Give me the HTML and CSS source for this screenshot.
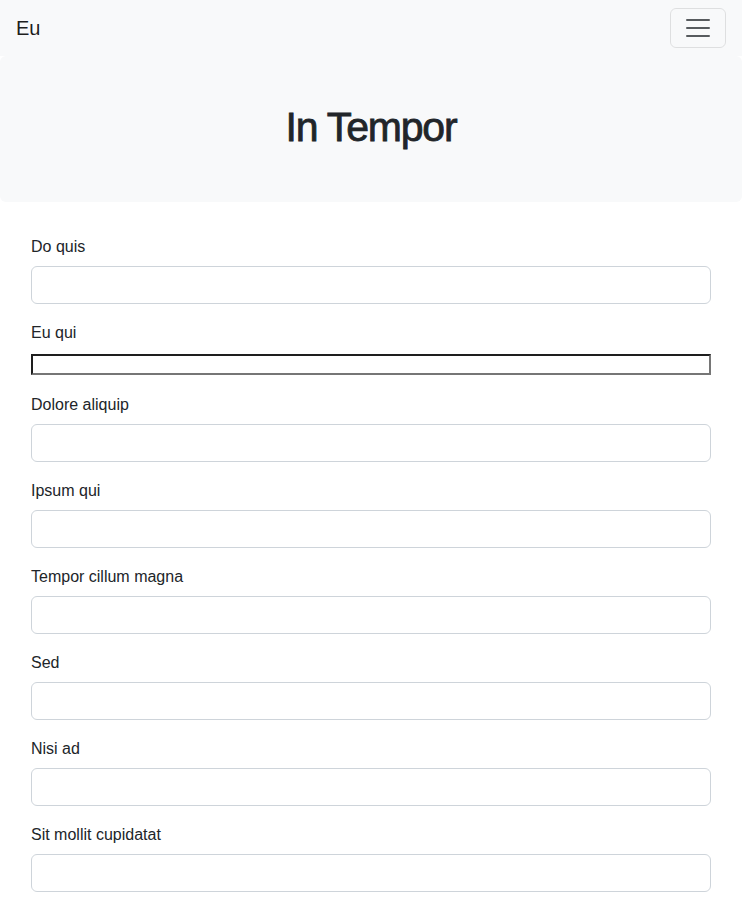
FILE: index.html
```html
<!DOCTYPE html>
<html lang="en">
<head>
<meta charset="utf-8">
<title>In Tempor</title>
<link rel="stylesheet" href="styles.css">
</head>
<body>
<nav class="navbar">
  <a class="brand" href="#">Eu</a>
  <button class="toggler" type="button" aria-label="Toggle navigation">
    <svg class="toggler-icon" viewBox="0 0 30 30" width="30" height="30"><path stroke="rgba(33,37,41,0.75)" stroke-linecap="round" stroke-miterlimit="10" stroke-width="2" d="M4 7h22M4 15h22M4 23h22"/></svg>
  </button>
</nav>
<header class="hero">
  <h1>In Tempor</h1>
</header>
<form class="form">
  <div class="field"><label>Do quis</label><input class="control" type="text"></div>
  <div class="field"><label>Eu qui</label><input class="plain" type="text"></div>
  <div class="field"><label>Dolore aliquip</label><input class="control" type="text"></div>
  <div class="field"><label>Ipsum qui</label><input class="control" type="text"></div>
  <div class="field"><label>Tempor cillum magna</label><input class="control" type="text"></div>
  <div class="field"><label>Sed</label><input class="control" type="text"></div>
  <div class="field"><label>Nisi ad</label><input class="control" type="text"></div>
  <div class="field"><label>Sit mollit cupidatat</label><input class="control" type="text"></div>
</form>
</body>
</html>
```

FILE: styles.css
```css
* { box-sizing: border-box; }
html, body { margin: 0; padding: 0; }
body {
  font-family: "Liberation Sans", Arial, sans-serif;
  font-size: 16px;
  line-height: 1.5;
  color: #212529;
  background: #fff;
}
.navbar {
  display: flex;
  align-items: center;
  justify-content: space-between;
  height: 56px;
  padding: 8px 16px;
  background: #f8f9fa;
}
.brand {
  font-size: 20px;
  line-height: 30px;
  color: rgba(0,0,0,0.9);
  text-decoration: none;
}
.toggler {
  display: flex;
  align-items: center;
  justify-content: center;
  width: 56px;
  height: 40px;
  padding: 4px 12px;
  background: transparent;
  border: 1px solid rgba(0,0,0,0.1);
  border-radius: 6px;
}
.toggler-icon { display: block; }
.hero {
  background: #f8f9fa;
  border-radius: 6px;
  padding: 46px 16px 50px;
  text-align: center;
}
.hero h1 {
  margin: 0;
  font-family: "Liberation Sans", Arial, sans-serif;
  font-weight: 400;
  font-size: 41px;
  line-height: 50px;
  letter-spacing: -1.2px;
  color: #212529;
  -webkit-text-stroke: 0.8px #212529;
}
.form {
  padding: 32px 31px 0;
}
.field {
  margin-bottom: 16px;
}
.field label {
  display: block;
  margin-bottom: 8px;
  line-height: 24px;
  padding-top: 1px;
  height: 24px;
}
.control {
  display: block;
  width: 100%;
  height: 38px;
  padding: 6px 12px;
  font: inherit;
  color: #212529;
  background: #fff;
  border: 1px solid #ced4da;
  border-radius: 6px;
}
.plain {
  width: 100%;
  height: 21px;
  padding: 1px 2px;
  font: 13.33px "Liberation Sans", Arial, sans-serif;
  background: #fff;
  border-style: solid;
  border-width: 2px;
  border-color: #1e1e1e #767676 #767676 #1e1e1e;
  vertical-align: baseline;
}
```
